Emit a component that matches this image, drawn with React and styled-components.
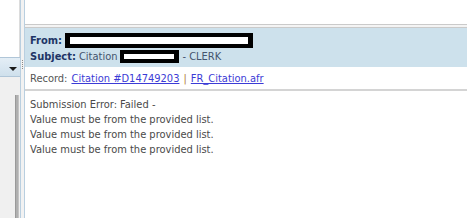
import React from 'react';
import styled, { createGlobalStyle } from 'styled-components';

const GlobalStyle = createGlobalStyle`
  html, body {
    margin: 0;
    padding: 0;
    background: #ffffff;
  }
  body {
    font-family: 'DejaVu Sans Condensed', 'Liberation Sans', sans-serif;
    font-size: 11px;
  }
`;

const Shell = styled.div`
  display: flex;
  width: 467px;
  height: 218px;
  overflow: hidden;
`;

const LeftPane = styled.div`
  width: 20px;
  display: flex;
  flex-direction: column;
  border-right: 1px solid #b9cfe0;
  background: #f0f0f0;
`;

const LeftTop = styled.div`
  height: 57px;
  background: #ffffff;
  border-right: 1px solid #dcdcdc;
`;

const DropBar = styled.div`
  height: 18px;
  display: flex;
  align-items: center;
  justify-content: flex-end;
  padding-right: 3px;
  border-top: 1px solid #b0c6d8;
  border-bottom: 1px solid #b0c6d8;
  background: linear-gradient(#e4eef6, #cfe0ec);
`;

const Arrow = styled.span`
  width: 0;
  height: 0;
  margin-top: 3px;
  border-left: 4px solid transparent;
  border-right: 4px solid transparent;
  border-top: 4px solid #1a1a1a;
`;

const LeftBody = styled.div`
  flex: 1;
  display: flex;
  padding-top: 18px;
  padding-left: 15px;
`;

// scroll track line in the folder list
const Track = styled.div`
  width: 2px;
  border-left: 1px solid #9a9a9a;
  border-right: 1px solid #c4c4c4;
  background: #b0b0b0;
`;

const Splitter = styled.div`
  width: 3px;
  background: #f2f2f2;
  display: flex;
  justify-content: center;
  padding-top: 60px;
`;

const Grip = styled.div`
  width: 1px;
  height: 10px;
  background: repeating-linear-gradient(#8a8a8a 0 1px, transparent 1px 2px);
`;

const RightPane = styled.div`
  flex: 1;
  display: flex;
  flex-direction: column;
  border-left: 1px solid #b9cfe0;
`;

const TopBlank = styled.div`
  height: 24px;
  background: #ffffff;
`;

const Rule = styled.div`
  height: 2px;
  border-top: 1px solid #cacaca;
  border-bottom: 1px solid #cacaca;
  background: #f4f4f4;
`;

const Header = styled.div`
  height: 39px;
  box-sizing: border-box;
  background: #cde1ec;
  display: flex;
  flex-direction: column;
  gap: 1px;
  padding: 5px 0 0 5px;
  color: #44546e;
`;

const HeaderLine = styled.div`
  display: flex;
  align-items: center;
  height: 15px;
  white-space: nowrap;
`;

const Label = styled.b`
  color: #1f3566;
  font-weight: bold;
  margin-right: 3px;
`;

// redaction block: black with a white bar inside
const Redact = styled.span`
  display: inline-flex;
  align-items: center;
  box-sizing: border-box;
  width: ${(p) => p.$w}px;
  height: ${(p) => p.$h}px;
  padding: 0 ${(p) => p.$pr}px 0 ${(p) => p.$pl}px;
  margin: 0 ${(p) => p.$mr}px 0 ${(p) => p.$ml}px;
  background: #000;

  &::after {
    content: '';
    flex: 1;
    height: ${(p) => p.$bar}px;
    background: #fff;
  }
`;

const RecordRow = styled.div`
  height: 22px;
  display: flex;
  align-items: center;
  padding-left: 5px;
  border-bottom: 2px solid #d4d4d4;
  color: #555;
  white-space: nowrap;
`;

const RecLink = styled.a`
  color: #3b3bd6;
  text-decoration: underline;
  margin: 0 4px;
`;

const Pipe = styled.span`
  color: #b07a3c;
`;

const Body = styled.div`
  padding: 6px 0 0 5px;
  color: #4a4a4a;
  line-height: 15px;
`;

export default function App() {
  return (
    <>
      <GlobalStyle />
      <Shell>
        <LeftPane>
          <LeftTop />
          <DropBar>
            <Arrow />
          </DropBar>
          <LeftBody>
            <Track />
          </LeftBody>
        </LeftPane>
        <Splitter>
          <Grip />
        </Splitter>
        <RightPane>
          <TopBlank />
          <Rule />
          <Header>
            <HeaderLine>
              <Label>From:</Label>
              <Redact $w={188} $h={15} $pl={5} $pr={5} $ml={0} $mr={0} $bar={7} />
            </HeaderLine>
            <HeaderLine>
              <Label>Subject:</Label>
              Citation
              <Redact $w={59} $h={13} $pl={4} $pr={5} $ml={3} $mr={3} $bar={5} />
              - CLERK
            </HeaderLine>
          </Header>
          <RecordRow>
            Record:
            <RecLink href="#">Citation #D14749203</RecLink>
            <Pipe>|</Pipe>
            <RecLink href="#">FR_Citation.afr</RecLink>
          </RecordRow>
          <Body>
            <div>Submission Error: Failed -</div>
            <div>Value must be from the provided list.</div>
            <div>Value must be from the provided list.</div>
            <div>Value must be from the provided list.</div>
          </Body>
        </RightPane>
      </Shell>
    </>
  );
}
